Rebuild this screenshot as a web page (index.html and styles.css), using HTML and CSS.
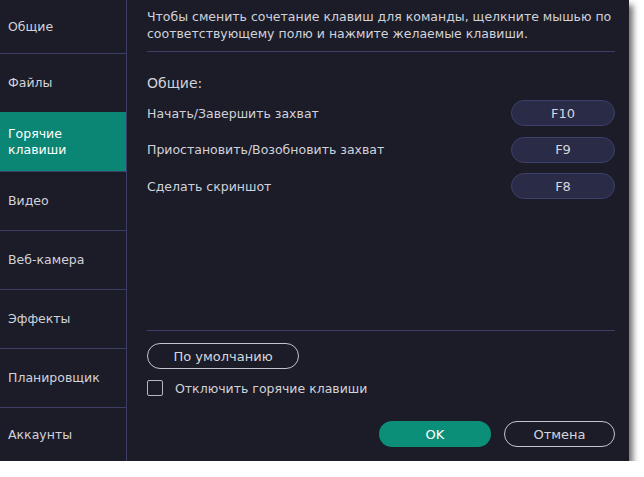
FILE: index.html
```html
<!DOCTYPE html>
<html lang="ru">
<head>
<meta charset="utf-8">
<link rel="stylesheet" href="styles.css">
</head>
<body>
<div class="window">
  <nav class="sidebar">
    <div class="nav-item first">Общие</div>
    <div class="nav-item">Файлы</div>
    <div class="nav-item active">Горячие<br>клавиши</div>
    <div class="nav-item">Видео</div>
    <div class="nav-item">Веб-камера</div>
    <div class="nav-item">Эффекты</div>
    <div class="nav-item">Планировщик</div>
    <div class="nav-item last">Аккаунты</div>
  </nav>
  <main class="content">
    <p class="hint">Чтобы сменить сочетание клавиш для команды, щелкните мышью по соответствующему полю и нажмите желаемые клавиши.</p>
    <div class="section-title">Общие:</div>
    <div class="rows">
      <div class="row"><span>Начать/Завершить захват</span><button class="key">F10</button></div>
      <div class="row"><span>Приостановить/Возобновить захват</span><button class="key">F9</button></div>
      <div class="row"><span>Сделать скриншот</span><button class="key">F8</button></div>
    </div>
    <div class="spacer"></div>
    <div class="bottom">
      <button class="outline default-btn">По умолчанию</button>
      <label class="check"><span class="box"></span>Отключить горячие клавиши</label>
      <div class="actions">
        <button class="ok">OK</button>
        <button class="outline cancel">Отмена</button>
      </div>
    </div>
  </main>
</div>
</body>
</html>
```

FILE: styles.css
```css
* { box-sizing: border-box; }
html, body { margin: 0; padding: 0; background: #ffffff; }
body {
  font-family: "DejaVu Sans", Verdana, sans-serif;
  font-size: 12px;
  color: #d2d2da;
}
.window {
  width: 629px;
  height: 461px;
  background: #1b1c28;
  display: flex;
  box-shadow: 4px 5px 6px rgba(0,0,0,0.55);
}
.sidebar {
  width: 127px;
  border-right: 1px solid #3d3e68;
  display: flex;
  flex-direction: column;
}
.nav-item {
  height: 59px;
  border-top: 1px solid #3d3e68;
  display: flex;
  align-items: center;
  padding-left: 8px;
  line-height: 16px;
  font-size: 12.5px;
}
.nav-item.first { height: 53px; border-top: none; }
.nav-item.last { height: 54px; }
.nav-item.active {
  background: #0b8574;
  color: #ffffff;
  border-top-color: #0b8574;
}
.content {
  flex: 1;
  padding: 8px 14px 14px 20px;
  display: flex;
  flex-direction: column;
}
.hint {
  margin: 0;
  line-height: 17px;
  padding-bottom: 9px;
  border-bottom: 1px solid #3d3e68;
  font-size: 12.5px;
}
.section-title {
  margin-top: 22px;
  font-size: 14px;
  line-height: 18px;
}
.rows {
  margin-top: 8px;
  display: flex;
  flex-direction: column;
  gap: 10.5px;
}
.row {
  display: flex;
  align-items: center;
  justify-content: space-between;
  height: 26px;
  font-size: 12.5px;
}
button {
  font-family: inherit;
  font-size: 13px;
  color: #d6d6de;
  cursor: pointer;
}
.key {
  width: 104px;
  height: 26px;
  border-radius: 13px;
  background: #2a2b46;
  border: 1px solid #3e3f6a;
}
.spacer { flex: 1; }
.bottom {
  border-top: 1px solid #3d3e68;
  padding-top: 12px;
  display: flex;
  flex-direction: column;
}
.outline {
  background: transparent;
  border: 1px solid #c4c4cc;
  border-radius: 13px;
  height: 26px;
}
.default-btn { width: 152px; }
.check {
  display: flex;
  align-items: center;
  margin-top: 11px;
  font-size: 12.5px;
}
.box {
  width: 16px;
  height: 16px;
  border: 1px solid #b8b8c0;
  border-radius: 2px;
  margin-right: 12px;
}
.actions {
  margin-top: 25px;
  display: flex;
  justify-content: flex-end;
  gap: 13px;
}
.ok {
  width: 112px;
  height: 26px;
  border-radius: 13px;
  border: none;
  background: #0b8f78;
  color: #ffffff;
}
.cancel { width: 111px; }
```
